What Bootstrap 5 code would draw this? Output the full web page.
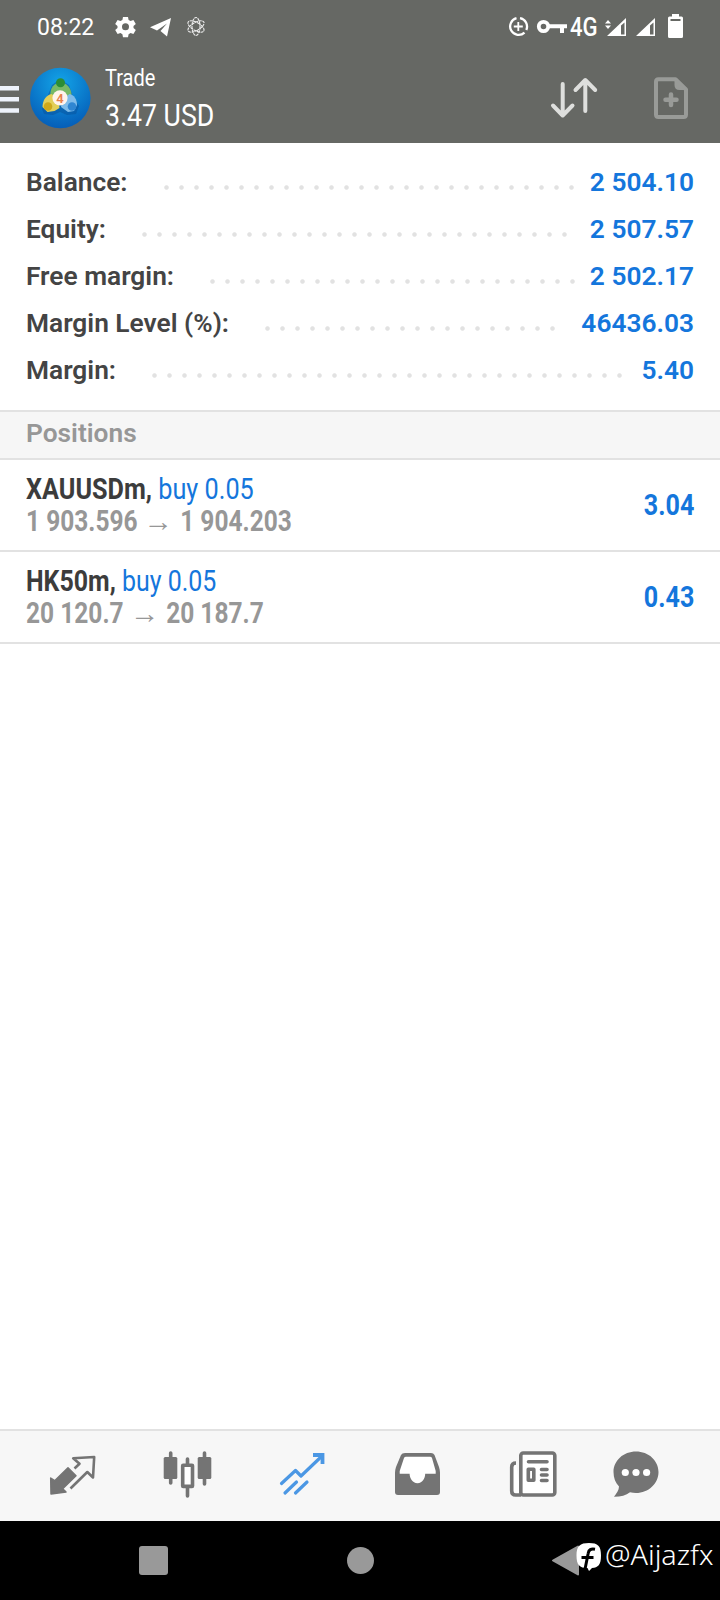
<!DOCTYPE html>
<html lang="en">
<head>
<meta charset="utf-8">
<meta name="viewport" content="width=device-width, initial-scale=1">
<title>Trade</title>
<link rel="stylesheet" href="https://cdn.jsdelivr.net/npm/bootstrap@5.3.0/dist/css/bootstrap.min.css">
<style>
  body { font-family: Roboto, "Liberation Sans", sans-serif; background: #fff; color: #444; }
  svg { display: block; flex: none; }
  .screen { width: 720px; height: 1600px; }
  .top { background: #666864; color: #fff; height: 143px; }
  .status { height: 54px; }
  .clock { font-size: 23px; line-height: 54px; height: 54px; padding-top: 1px; width: 75px; padding-left: 37px; box-sizing: content-box; font-weight: 450; }
  .cond { display: inline-block; transform: scaleX(.87); transform-origin: 0 50%; white-space: nowrap; }
  .cond-end { transform-origin: 100% 50%; }
  .net { font-size: 26px; line-height: 54px; width: 30px; font-weight: 500; margin-left: -1px; margin-right: 2px; }
  .net .cond { transform: scaleX(.85); }
  .appbar { height: 89px; }
  .ttl { font-size: 23px; line-height: 38px; padding-top: 2px; }
  .sum { font-size: 31px; line-height: 38px; margin-top: -1px; }
  .sum .cond { transform: scaleX(.86); }
  .summary { padding: 16px 26px 16px; border-bottom: 2px solid #e2e2e2; font-size: 26.3px; font-weight: 600; }
  .summary > div { height: 47px; line-height: 47px; }
  .leader { height: 47px; margin-left: 31px; background: radial-gradient(circle at 7.5px 28.5px, #e2e2e2 1.8px, transparent 2.7px) 0 0 / 15px 47px repeat-x; }
  .blue { color: #1476dc; }
  .section-head { height: 48px; line-height: 43px; padding-left: 26px; background: #f6f6f6; border-bottom: 2px solid #e2e2e2; font-size: 26.3px; font-weight: 600; color: #979797; }
  .deal { height: 92px; padding: 13px 26px 13px; border-bottom: 2px solid #e2e2e2; font-size: 29px; line-height: 32px; }
  .sym { font-weight: 700; color: #3c3c3c; }
  .prices { font-weight: 700; color: #979797; transform: scaleX(.845); }
  .prices i { font-style: normal; display: inline-block; margin: 0 4px 0 3px; transform: scaleX(1.2); }
  .profit { font-weight: 700; }
  .profit.cond { transform: scaleX(.865); }
  .tabs { height: 92px; background: #f7f7f7; border-top: 2px solid #e2e2e2; padding-left: 42px; gap: 55px; }
  .tabs a:last-child { margin-left: -12px; }
  .sys { height: 79px; background: #000; }
  .wm { right: 0; top: 0; width: 150px; height: 79px; color: #fff; }
  .wm-text { font-family: "Noto Sans", sans-serif; font-weight: 300; font-size: 28px; line-height: 38px; left: 35px; top: 14px; transform: scaleX(1.025); }
</style>
</head>
<body>
<div class="screen d-flex flex-column overflow-hidden">
  <header class="top">
    <div class="status d-flex align-items-center">
      <div class="clock">08:22</div>
      <svg width="98" height="54" viewBox="112 0 98 54">
        <g fill="#fff">
          <path fill-rule="evenodd" d="M123 17h5l.6 3 2 1.100 2.800-1 2.400 4-2.300 2v2l2.300 2-2.400 4-2.800-1-2 1.100-.6 3h-5l-.6-3-2-1.100-2.800 1-2.400-4 2.300-2v-2l-2.300-2 2.400-4 2.800 1 2-1.100zM125.500 23.300a3.500 3.500 0 1 0 0 7 3.500 3.500 0 0 0 0-7z"/>
          <path d="M171 18 150 27.300l7 3.200 10-7-6.500 7.500 6.500 5.500z"/>
        </g>
        <g fill="none" stroke="#eee" stroke-width="1.100" stroke-dasharray="3 .7">
          <ellipse cx="196" cy="26.500" rx="4" ry="9"/>
          <ellipse cx="196" cy="26.500" rx="4" ry="9" transform="rotate(60 196 26.500)"/>
          <ellipse cx="196" cy="26.500" rx="4" ry="9" transform="rotate(-60 196 26.500)"/>
        </g>
      </svg>
      <svg class="ms-auto" width="67" height="54" viewBox="504 0 67 54">
        <g fill="none" stroke="#fff">
          <path stroke-width="2.300" d="M520 18.200a8.500 8.500 0 0 1 6.300 11.800M524.500 32.600A8.500 8.500 0 1 1 516.500 18.200"/>
          <path stroke-width="1.800" d="M518.300 22v9M513.800 26.500h9"/>
          <circle cx="543.500" cy="26.500" r="4.700" stroke-width="3.800"/>
          <path stroke-width="4" d="M549 26.300h18M562 26v7"/>
        </g>
      </svg>
      <div class="net"><span class="cond">4G</span></div>
      <svg width="118" height="54" viewBox="602 0 118 54">
        <g fill="#fff">
          <path d="M605 23.500l3-3.500 3 3.500zM605 25.500l3 3.500 3-3.500z"/>
          <path fill-rule="evenodd" d="M626 18v18h-19zM624.500 22.500l-3.500 3v9h3.500z"/>
          <path fill-rule="evenodd" d="M655 18v18h-19zM653.500 22.500l-3.500 3v9h3.500z"/>
          <path fill-rule="evenodd" d="M672 16.500V14h7v2.500h2.500q1.500 0 1.500 1.500v18.500q0 1.500-1.500 1.500h-12q-1.500 0-1.500-1.500V18q0-1.500 1.500-1.500zM670.500 19v2h10v-2z"/>
        </g>
      </svg>
    </div>
    <div class="appbar d-flex align-items-start">
      <svg width="105" height="89" viewBox="0 54 105 89">
        <defs>
          <radialGradient id="sky" cx=".5" cy=".25" r=".8"><stop offset="0" stop-color="#13a4e8"/><stop offset="1" stop-color="#0459b5"/></radialGradient>
        </defs>
        <path stroke="#eef3fb" stroke-width="4.500" d="M0 88.200h19M0 99.300h19M0 110.400h19"/>
        <circle cx="60.300" cy="98" r="30.300" fill="url(#sky)"/>
        <path d="M42 109l6-14 4-10 8-6 9 6 4 12 6 9-3 8-9 1-7-3-7 3-9-1z" fill="#07509a" opacity=".5"/>
        <path fill="#78b966" d="M50.500 96c-1-8 4-13.500 10-13.500s11.500 6 11 13.500l-6 2-10-1z"/>
        <path fill="#e3cf58" d="M42.500 107c0-7 4-12 9-13l7 5 1 9-5 3-7 1z"/>
        <path fill="#7fbcea" d="M77 105c0-6-3-10-7.500-11l-7 5-1.500 8 7 5 6-1z"/>
        <circle cx="60.500" cy="82.800" r="4.500" fill="#2b8d36"/>
        <circle cx="48" cy="106.500" r="4.300" fill="#cfa81a"/>
        <circle cx="72" cy="106.500" r="4.300" fill="#2f86d2"/>
        <circle cx="60" cy="97.800" r="7.600" fill="#fff4ec"/>
        <text x="60" y="102.500" font-size="13" font-weight="600" text-anchor="middle" fill="#e8814b">4</text>
      </svg>
      <div class="pt-1">
        <div class="ttl"><span class="cond">Trade</span></div>
        <div class="sum"><span class="cond">3.47 USD</span></div>
      </div>
      <svg class="ms-auto" width="180" height="89" viewBox="540 54 180 89">
        <path fill="none" stroke="#dedfdd" stroke-width="4" stroke-linecap="round" stroke-linejoin="round" d="M562.700 84v31M553 105.500l9.700 10 9.800-10M585.300 111V80.500M575.500 90l9.800-10 9.900 10"/>
        <g fill="none" stroke="#999b98" stroke-width="4" stroke-linejoin="round">
          <path d="M658.500 79.300H675.500L686 89.500V114.500Q686 117 683.500 117H658.500Q656 117 656 114.500V81.800Q656 79.300 658.500 79.300Z"/>
          <path stroke-width="4.500" stroke-linecap="round" d="M671 94.500v10.500M665.500 99.800h11"/>
          <path fill="#999b98" stroke-width="2" d="M675.500 79.500V85q0 4 4 4h6.500z"/>
        </g>
      </svg>
    </div>
  </header>

  <main class="flex-grow-1">
    <section class="summary">
      <div class="d-flex"><span>Balance:</span><span class="leader" style="width:420px"></span><span class="blue ms-auto">2 504.10</span></div>
      <div class="d-flex"><span>Equity:</span><span class="leader" style="width:435px"></span><span class="blue ms-auto">2 507.57</span></div>
      <div class="d-flex"><span>Free margin:</span><span class="leader" style="width:375px"></span><span class="blue ms-auto">2 502.17</span></div>
      <div class="d-flex"><span>Margin Level (%):</span><span class="leader" style="width:300px"></span><span class="blue ms-auto">46436.03</span></div>
      <div class="d-flex"><span>Margin:</span><span class="leader" style="width:480px"></span><span class="blue ms-auto">5.40</span></div>
    </section>
    <div class="section-head">Positions</div>
    <div class="deal d-flex justify-content-between align-items-center">
      <div>
        <div><span class="cond"><span class="sym">XAUUSDm,</span> <span class="blue">buy 0.05</span></span></div>
        <div><span class="cond prices">1 903.596 <i>→</i> 1 904.203</span></div>
      </div>
      <span class="cond cond-end profit blue">3.04</span>
    </div>
    <div class="deal d-flex justify-content-between align-items-center">
      <div>
        <div><span class="cond" style="transform:scaleX(.86)"><span class="sym">HK50m,</span> <span class="blue">buy 0.05</span></span></div>
        <div><span class="cond prices">20 120.7 <i>→</i> 20 187.7</span></div>
      </div>
      <span class="cond cond-end profit blue">0.43</span>
    </div>
  </main>

  <nav class="tabs d-flex">
    <a href="#" aria-label="Quotes"><svg width="60" height="90" viewBox="42 1431 60 90">
      <path fill="#747474" stroke="#747474" stroke-width="1.500" stroke-linejoin="round" d="M51 1494l-.3-16 4 2.700 13.300-13 8 8-13.300 13 3.300 3.300z"/>
      <path fill="none" stroke="#747474" stroke-width="2.600" stroke-linejoin="round" d="M74.500 1468.500l5-4.800-6.300-5.400 21-1.300-1.200 20.500-5.700-5.500-16.800 16.500"/>
    </svg></a>
    <a href="#" aria-label="Charts"><svg width="60" height="90" viewBox="157 1431 60 90">
      <g stroke="#747474" stroke-width="3.600" stroke-linecap="round"><path d="M170.700 1453v30M187.500 1459v5M187.500 1488v8M204.500 1453v31"/></g>
      <rect x="163.700" y="1457" width="13.600" height="22" rx="1.500" fill="#747474"/>
      <rect x="197.700" y="1457" width="13.600" height="22" rx="1.500" fill="#747474"/>
      <rect x="182.700" y="1465.200" width="9.800" height="21.200" fill="#fff" stroke="#747474" stroke-width="3.600" rx=".5"/>
    </svg></a>
    <a href="#" aria-label="Trade"><svg width="60" height="90" viewBox="272 1431 60 90">
      <g fill="none" stroke="#4b97e4" stroke-width="3.200" stroke-linecap="round" stroke-linejoin="round">
        <path d="M281.500 1483.500l14-13 5.500 5.500 21-20"/>
        <path stroke-width="3.800" stroke-linecap="butt" stroke-linejoin="miter" d="M313 1455h9.500v9"/>
        <path d="M285 1493l11.500-11M295.500 1493l11.500-11"/>
      </g>
    </svg></a>
    <a href="#" aria-label="History"><svg width="60" height="90" viewBox="387 1431 60 90">
      <path fill="#747474" d="M405 1453h26q2.500 0 3.500 2l4.500 12q1 3 1 6v19q0 3-3 3h-39q-3 0-3-3v-19q0-3 1-6l5-12q1-2 4-2z"/>
      <path fill="#fff" d="M406 1456.800h24q1.500 0 2 1.200l3.700 13v2.800h-10.500c0 4-2.500 9.400-7.700 9.400s-7.900-5.400-7.900-9.400h-9.900v-2.800l4.300-13q.5-1.200 2-1.200z"/>
    </svg></a>
    <a href="#" aria-label="News"><svg width="60" height="90" viewBox="502 1431 60 90">
      <g fill="none" stroke="#747474" stroke-width="3.600" stroke-linecap="round" stroke-linejoin="round">
        <path fill="#fff" stroke-linecap="butt" d="M516 1463q-4.300 0-4.300 4v24q0 4 4 4h5.300"/>
        <rect x="520.800" y="1453" width="34" height="42" rx="2.500" fill="#fff"/>
        <path d="M528.500 1461.800h18.500M541.500 1469.500h5.500M541.500 1475h5.500M541.500 1480.500h5.500"/>
        <rect x="528.300" y="1469.300" width="5.500" height="11"/>
      </g>
    </svg></a>
    <a href="#" aria-label="Chat"><svg width="60" height="90" viewBox="605 1430.500 60 90">
      <path fill="#747474" d="M636 1451c12.500 0 22.500 9 22.500 20.500s-10 21-22.500 21c-2 0-4-.3-6-.8-4 3-9 4.500-16 4.500 2.500-3 5-6.500 5-10.200-3.500-3.500-5.500-8.500-5.500-14.500 0-11.500 10-20.500 22.500-20.500z"/>
      <g fill="#fff"><circle cx="625.300" cy="1472" r="3.600"/><circle cx="636" cy="1472" r="3.600"/><circle cx="646.600" cy="1472" r="3.600"/></g>
    </svg></a>
  </nav>

  <footer class="sys position-relative">
    <svg width="720" height="79" viewBox="0 1521 720 79" fill="#999">
      <rect x="139" y="1546" width="29" height="29" rx="3"/>
      <circle cx="360.500" cy="1560.500" r="13.500"/>
      <path stroke="#999" stroke-width="2" stroke-linejoin="round" d="M553 1560.500l25-14v28z"/>
    </svg>
    <div class="wm position-absolute">
      <svg width="34" height="79" viewBox="570 1521 34 79">
        <path fill="#fff" d="M589 1543c9 0 12 3 12 12.500s-3 12-9 12.500l-3 3-1.500-3c-8 0-11-3-11-12.500s3.500-12.500 12.500-12.500z"/>
        <path fill="none" stroke="#000" stroke-width="3" d="M595 1549.200q-6-1.200-6.800 4l-3 15M581.500 1557.500h12"/>
      </svg>
      <span class="wm-text cond position-absolute">@Aijazfx</span>
    </div>
  </footer>
</div>
<script src="https://cdn.jsdelivr.net/npm/bootstrap@5.3.0/dist/js/bootstrap.bundle.min.js"></script>
</body>
</html>
